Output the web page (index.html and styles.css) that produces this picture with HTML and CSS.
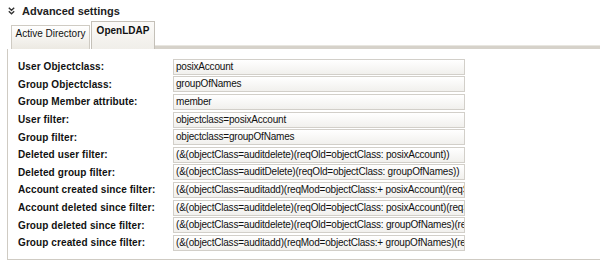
FILE: index.html
```html
<!DOCTYPE html>
<html>
<head>
<meta charset="utf-8">
<link rel="stylesheet" href="styles.css">
</head>
<body>
<div class="section-head">
  <svg class="chev" width="7" height="8" viewBox="0 0 7 8"><path d="M0.8 0.8 L3.5 3.3 L6.2 0.8 M0.8 4.3 L3.5 6.8 L6.2 4.3" fill="none" stroke="#333" stroke-width="1.4"/></svg>
  <span>Advanced settings</span>
</div>
<div class="tabs">
  <div class="tab">Active Directory</div>
  <div class="tab active">OpenLDAP</div>
  <div class="tab-fill"></div>
</div>
<div class="panel">
  <div class="row"><label>User Objectclass:</label><div class="field">posixAccount</div></div>
  <div class="row"><label>Group Objectclass:</label><div class="field">groupOfNames</div></div>
  <div class="row"><label>Group Member attribute:</label><div class="field">member</div></div>
  <div class="row"><label>User filter:</label><div class="field">objectclass=posixAccount</div></div>
  <div class="row"><label>Group filter:</label><div class="field">objectclass=groupOfNames</div></div>
  <div class="row"><label>Deleted user filter:</label><div class="field">(&amp;(objectClass=auditdelete)(reqOld=objectClass: posixAccount))</div></div>
  <div class="row"><label>Deleted group filter:</label><div class="field">(&amp;(objectClass=auditDelete)(reqOld=objectClass: groupOfNames))</div></div>
  <div class="row"><label>Account created since filter:</label><div class="field">(&amp;(objectClass=auditadd)(reqMod=objectClass:+ posixAccount)(reqStart&gt;=%s))</div></div>
  <div class="row"><label>Account deleted since filter:</label><div class="field">(&amp;(objectClass=auditdelete)(reqOld=objectClass: posixAccount)(reqStart&gt;=%s))</div></div>
  <div class="row"><label>Group deleted since filter:</label><div class="field">(&amp;(objectClass=auditdelete)(reqOld=objectClass: groupOfNames)(reqStart&gt;=%s))</div></div>
  <div class="row"><label>Group created since filter:</label><div class="field">(&amp;(objectClass=auditadd)(reqMod=objectClass:+ groupOfNames)(reqStart&gt;=%s))</div></div>
</div>
</body>
</html>
```
FILE: styles.css
```css
html, body { margin: 0; padding: 0; background: #fff; }
body { font-family: "Liberation Sans", Arial, sans-serif; color: #000; width: 600px; height: 267px; overflow: hidden; }
.section-head { display: flex; align-items: center; gap: 7px; padding: 4px 0 0 8px; height: 14px; font-weight: bold; font-size: 11px; color: #222; }
.chev { display: block; }
.tabs { display: flex; align-items: flex-end; margin: 0 0 0 7px; height: 31px; }
.tab { font-size: 10px; padding: 0; height: 24px; line-height: 14px; padding-top: 1px; border: 1px solid #cfcbc3; border-bottom: none; background: linear-gradient(#ffffff, #ece9e2); margin-left: 4px; color: #111; box-sizing: border-box; width: 79px; text-align: center; white-space: nowrap; }
.tab.active { font-weight: bold; height: 28px; line-height: 16px; margin-left: 1px; width: 64px; background: linear-gradient(#fbfaf8, #f0eee9); border-color: #c4c0b8; }
.tab-fill { flex: 1; height: 3px; background: #d6d2ca; border-top: 1px solid #e8e6e0; }
.panel { margin: 0 0 0 7px; border-left: 1px solid #cfcbc3; border-bottom: 1px solid #cfcbc3; padding: 9px 0 7px 10px; width: 640px; }
.row { display: flex; align-items: center; height: 17.6px; }
.row label { width: 155px; font-weight: bold; font-size: 10px; letter-spacing: 0.1px; color: #111; flex: none; }
.field { width: 292px; height: 16px; box-sizing: border-box; border: 1px solid #d2cfc9; background: linear-gradient(#ffffff, #f1f0ed); font-size: 10px; letter-spacing: -0.2px; line-height: 14px; padding-left: 2px; white-space: nowrap; overflow: hidden; color: #111; }
```
